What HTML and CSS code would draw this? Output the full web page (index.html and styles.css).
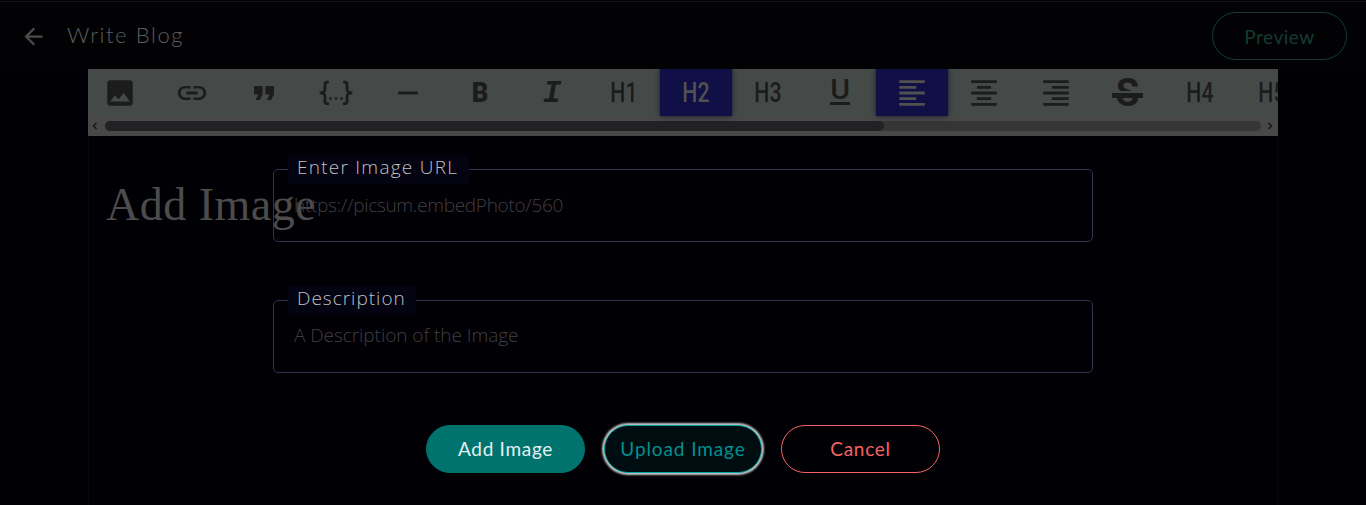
FILE: index.html
```html
<!DOCTYPE html>
<html lang="en">
<head>
<meta charset="utf-8">
<title>Write Blog</title>
<link rel="stylesheet" href="styles.css">
</head>
<body>
<header class="topbar">
  <svg class="back" viewBox="0 0 24 24"><path d="M20 11H7.830l5.590-5.590L12 4l-8 8 8 8 1.410-1.410L7.830 13H20z"/></svg>
  <h1 class="title">Write Blog</h1>
  <button class="preview"><span>Preview</span></button>
</header>
<main class="editor">
  <div class="toolbar">
    <div class="tools">
      <div class="tool"><svg viewBox="0 0 24 24"><path d="M21 19V5c0-1.100-.9-2-2-2H5c-1.100 0-2 .9-2 2v14c0 1.100.9 2 2 2h14c1.100 0 2-.9 2-2zM8.500 13.500l2.500 3.010L14.500 12l4.500 6H5l3.500-4.500z"/></svg></div>
      <div class="tool"><svg viewBox="0 0 24 24"><path d="M3.900 12c0-1.710 1.390-3.100 3.100-3.100h4V7H7c-2.760 0-5 2.240-5 5s2.240 5 5 5h4v-1.900H7c-1.710 0-3.100-1.390-3.100-3.100zM8 13h8v-2H8v2zm9-6h-4v1.900h4c1.710 0 3.100 1.390 3.100 3.100s-1.390 3.100-3.100 3.100h-4V17h4c2.760 0 5-2.240 5-5s-2.240-5-5-5z"/></svg></div>
      <div class="tool"><svg viewBox="0 0 24 24"><path d="M6 17h3l2-4V7H5v6h3zm8 0h3l2-4V7h-6v6h3z"/></svg></div>
      <div class="tool"><svg viewBox="0 0 24 24"><path class="stroke" d="M7 4.300H5.700Q4.200 4.300 4.200 5.800V9.300Q4.200 11.800 0.500 11.900Q4.200 12 4.200 14.500V18Q4.200 19.500 5.700 19.500H7M17 4.300h1.300Q19.800 4.300 19.800 5.800V9.300Q19.800 11.800 23.500 11.900Q19.800 12 19.800 14.500V18Q19.800 19.500 18.300 19.500H17"/><path d="M7.300 15h1.700v1.700H7.300zM11.200 15h1.700v1.700h-1.700zM15.100 15h1.700v1.700h-1.700z"/></svg></div>
      <div class="tool"><svg viewBox="0 0 24 24"><path d="M5 11h14v2H5z"/></svg></div>
      <div class="tool"><span class="bold">B</span></div>
      <div class="tool"><span class="italic">I</span></div>
      <div class="tool"><span class="heading">H1</span></div>
      <div class="tool active"><span class="heading">H2</span></div>
      <div class="tool"><span class="heading">H3</span></div>
      <div class="tool"><span class="underline"><span>U</span></span></div>
      <div class="tool active"><svg viewBox="0 0 24 24"><path d="M3 3h18v2H3zM3 7h12v2H3zM3 11h18v2H3zM3 15h12v2H3zM3 19h18v2H3z"/></svg></div>
      <div class="tool"><svg viewBox="0 0 24 24"><path d="M3 3h18v2H3zM7 7h10v2H7zM3 11h18v2H3zM7 15h10v2H7zM3 19h18v2H3z"/></svg></div>
      <div class="tool"><svg viewBox="0 0 24 24"><path d="M3 3h18v2H3zM9 7h12v2H9zM3 11h18v2H3zM9 15h12v2H9zM3 19h18v2H3z"/></svg></div>
      <div class="tool"><span class="strike">S</span></div>
      <div class="tool"><span class="heading">H4</span></div>
      <div class="tool"><span class="heading">H5</span></div>
    </div>
    <div class="scroll">
      <svg class="arrow" viewBox="0 0 6 8"><path d="M4.500 1L1.500 4l3 3"/></svg>
      <div class="track"><div class="thumb"></div></div>
      <svg class="arrow" viewBox="0 0 6 8"><path d="M1.500 1l3 3-3 3"/></svg>
    </div>
  </div>
  <h2 class="doc-title">Add Image</h2>
</main>
<form class="dialog">
  <div class="field">
    <label class="label"><span class="l-url">Enter Image URL</span></label>
    <div class="placeholder p-url">https://picsum.embedPhoto/560</div>
  </div>
  <div class="field">
    <label class="label desc"><span class="l-desc">Description</span></label>
    <div class="placeholder p-desc">A Description of the Image</div>
  </div>
  <div class="actions">
    <button type="button" class="btn add"><span>Add Image</span></button>
    <button type="button" class="btn upload"><span>Upload Image</span></button>
    <button type="button" class="btn cancel"><span>Cancel</span></button>
  </div>
</form>
</body>
</html>
```
FILE: styles.css
```css
* { box-sizing: border-box; }
body { margin: 0; width: 1366px; height: 505px; overflow: hidden; position: relative; background: #010005; font-family: Lato, sans-serif; }
button { font-family: inherit; padding: 0; background: none; white-space: nowrap; }
.topbar { height: 69px; border-top: 1px solid #010102; background: #020204; box-shadow: inset 0 1px #151517; display: flex; align-items: center; padding: 2px 19px 0 20px; }
.back { width: 27px; height: 27px; fill: #4b4b4b; }
.title { margin: 0 auto 2px 20px; font-size: 22px; font-weight: 300; letter-spacing: 1.600px; line-height: 28px; color: #5c5c5c; }
.preview { width: 135px; height: 48px; border: 1px solid #153a32; border-radius: 24px; color: #153a32; font-size: 19px; letter-spacing: .5px; }
.btn span { display: block; padding-bottom: 1px; }
.editor { width: 1190px; height: 436px; margin: 0 auto; box-shadow: inset 1px 0 #07070c, inset -1px 0 #07070c; }
.toolbar { height: 67px; background: #484848; overflow: hidden; }
.tools { display: flex; width: 1224px; height: 47px; margin-left: -4px; background: #454a48; }
.tool { flex: 0 0 72px; display: flex; align-items: center; justify-content: center; color: #1c1c1c; font-family: Roboto, sans-serif; }
.tool svg { width: 34px; height: 34px; margin: 0 1px 0 0; fill: currentColor; }
.tool .stroke { fill: none; stroke: currentColor; stroke-width: 2; }
.active { background: #100f46; color: #51514f; box-shadow: 0 0 5px #15152c; }
.heading { font-size: 28px; font-weight: 500; line-height: 34px; transform: scaleX(.76); margin: 0 1px 0 0; }
.bold { font-size: 28px; font-weight: 900; line-height: 34px; transform: scaleX(.92); }
.italic { font: italic bold 31px/34px "Liberation Mono", monospace; margin-top: 2px; }
.underline { width: 20px; height: 25px; border-bottom: 3px solid; display: flex; justify-content: center; font-size: 28px; font-weight: 500; line-height: 20px; }
.underline span { transform: scaleX(1.080); }
.strike { position: relative; width: 31px; font-size: 38px; font-weight: 700; line-height: 44px; text-align: center; margin-right: 1px; }
.strike::after { content: ""; position: absolute; left: 0; top: 20px; width: 31px; height: 5px; background: #1c1c1c; border-top: 2px solid #454a48; }
.scroll { height: 20px; display: flex; align-items: center; justify-content: space-between; padding: 0 5px 0 4px; }
.arrow { width: 6px; height: 8px; fill: none; stroke: #161616; stroke-width: 1.500; }
.track { width: 1156px; height: 10px; border-radius: 5px; background: #353535; margin-right: -1px; }
.thumb { width: 779px; height: 10px; border-radius: 5px; background: #222224; }
.doc-title { margin: 41px 0 0 18px; font: 400 46px/56px "Liberation Serif", serif; letter-spacing: .5px; color: #4c4c4b; white-space: nowrap; }
.dialog { position: absolute; left: 273px; top: 155px; width: 820px; font-family: "Open Sans", sans-serif; }
.field { height: 73px; margin-top: 14px; border: 1px solid #34324e; border-radius: 5px; padding-left: 14px; }
.field + .field { margin-top: 58px; }
.label { display: block; width: 181px; height: 29px; margin-top: -15px; padding-left: 9px; background: #040312; color: #c0c0c0; font-size: 19px; font-weight: 300; line-height: 25px; white-space: nowrap; }
.desc { width: 128px; }
.l-url { letter-spacing: 1.250px; }
.l-desc { letter-spacing: 1px; }
.placeholder { padding: 7px 0 0 6px; color: #413f41; font-size: 19px; font-weight: 300; line-height: 28px; letter-spacing: -.3px; white-space: nowrap; }
.p-desc { padding-top: 6px; letter-spacing: -.05px; }
.actions { display: flex; justify-content: center; gap: 18px; margin-top: 52px; font-family: Lato, sans-serif; }
.btn { height: 48px; width: 159px; border: 1px solid; border-radius: 24px; font-size: 19px; letter-spacing: .7px; }
.add { background: #00736f; border-color: #00736f; color: #e3f0f0; }
.upload { width: 158px; margin: 0 1px; background: #000d10; border: 1px solid #00a5a4; color: #00918f; box-shadow: 0 0 2px 2px #c4c4c4; }
.upload span { letter-spacing: .9px; }
.cancel { color: #f76263; }
```
